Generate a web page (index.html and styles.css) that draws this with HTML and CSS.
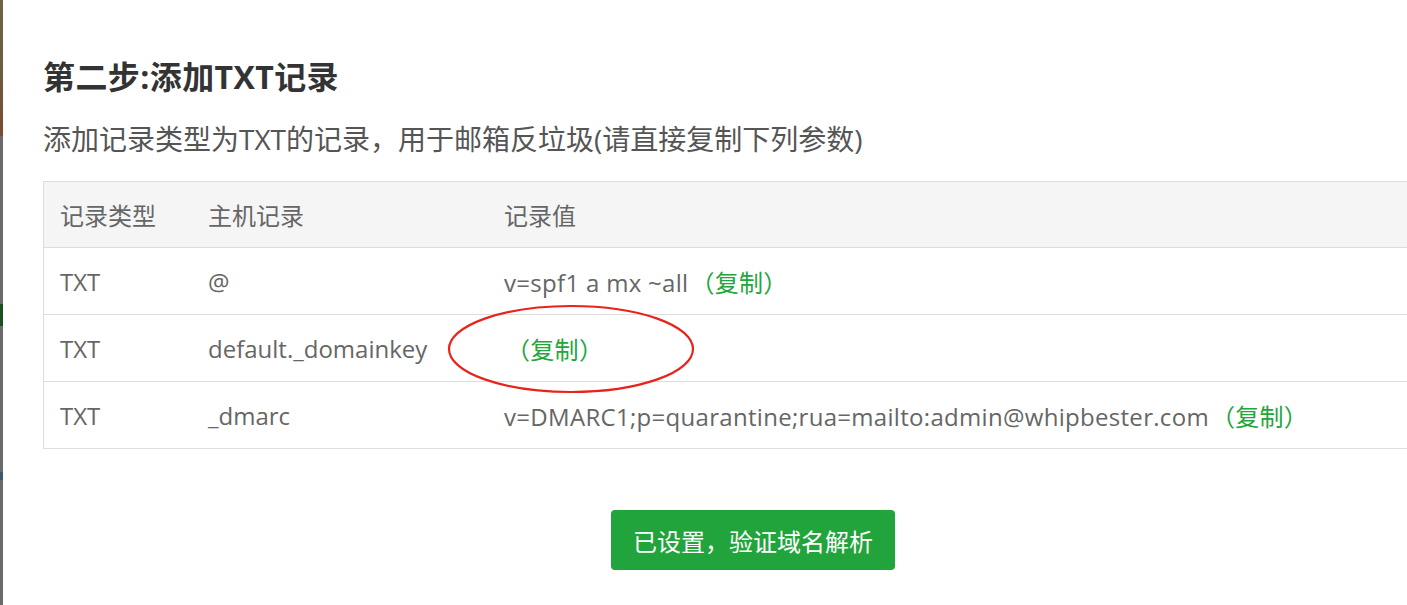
FILE: index.html
```html
<html>
  <head>
    <title>添加TXT记录</title>
    <link rel="stylesheet" href="styles.css">
  </head>
  <body>
    <div class="backdrop">
      <div class="backdrop-photo"></div>
      <div class="backdrop-mark mark-green"></div>
      <div class="backdrop-mark mark-blue"></div>
    </div>

    <section class="modal">
      <h2 class="step-title">第二步:添加TXT记录</h2>
      <p class="step-desc">添加记录类型为TXT的记录，用于邮箱反垃圾(请直接复制下列参数)</p>

      <table class="records">
        <thead>
          <tr>
            <th class="col-type">记录类型</th>
            <th class="col-host">主机记录</th>
            <th>记录值</th>
          </tr>
        </thead>
        <tbody>
          <tr>
            <td>TXT</td>
            <td>@</td>
            <td class="value">v=spf1 a mx ~all<a class="copy">（复制）</a></td>
          </tr>
          <tr>
            <td>TXT</td>
            <td>default._domainkey</td>
            <td class="value"><a class="copy">（复制）</a></td>
          </tr>
          <tr>
            <td>TXT</td>
            <td>_dmarc</td>
            <td class="value">v=DMARC1;p=quarantine;rua=mailto:admin@whipbester.com<a class="copy">（复制）</a></td>
          </tr>
        </tbody>
      </table>

      <div class="actions">
        <button class="btn-verify">已设置，验证域名解析</button>
      </div>

      <svg class="annotation" width="252" height="94" viewBox="0 0 252 94">
        <ellipse cx="126" cy="47" rx="122" ry="43" fill="none" stroke="#e8231b" stroke-width="2.2" />
      </svg>
    </section>
  </body>
</html>
```

FILE: styles.css
```css
:root {
  --fonts: "Open Sans", "Noto Sans CJK SC", sans-serif;
  --text-dark: #333333;
  --text-mid: #555555;
  --text-cell: #666666;
  --border: #dddddd;
  --head-bg: #f5f5f5;
  --green: #22a63c;
  --btn-green: #21a43c;
}

html,
body {
  margin: 0;
  padding: 0;
  height: 100%;
  overflow: hidden;
}

body {
  display: flex;
  font-family: var(--fonts);
  background: #ffffff;
}

.backdrop {
  position: relative;
  flex: 0 0 3px;
  background: #6b6b6b;
}

.backdrop-photo {
  height: 136px;
  background: linear-gradient(#6c6546, #6b5d40 50%, #7b4b2f);
}

.backdrop-mark {
  position: absolute;
  left: 0;
  width: 3px;
}

.mark-green {
  top: 304px;
  height: 22px;
  background: #1d4d22;
}

.mark-blue {
  top: 472px;
  height: 8px;
  background: #3d5a6a;
}

.modal {
  position: relative;
  flex: 0 0 1500px;
  box-sizing: border-box;
  padding: 57px 40px 0 40px;
}

.step-title {
  margin: 0;
  font-size: 32px;
  line-height: 40px;
  font-weight: bold;
  letter-spacing: 0.4px;
  color: var(--text-dark);
}

.step-desc {
  margin: 24px 0 0 0;
  font-size: 28px;
  line-height: 36px;
  color: var(--text-mid);
}

.records {
  width: 100%;
  margin-top: 24px;
  border-collapse: collapse;
  border: 1px solid var(--border);
  font-size: 24px;
  color: var(--text-cell);
}

.records th,
.records td {
  height: 67px;
  padding: 0 16px;
  text-align: left;
  font-weight: normal;
  border-top: 1px solid var(--border);
}

.records th {
  height: 66px;
  background: var(--head-bg);
}

.records .value {
  letter-spacing: 0.3px;
}

.col-type {
  width: 116px;
}

.col-host {
  width: 264px;
}

.copy {
  margin-left: 2px;
  color: var(--green);
  cursor: pointer;
}

.actions {
  display: flex;
  justify-content: center;
  margin-top: 61px;
}

.btn-verify {
  height: 60px;
  padding: 0 22px;
  border: none;
  border-radius: 4px;
  background: var(--btn-green);
  color: #ffffff;
  font-family: var(--fonts);
  font-size: 24px;
}

.annotation {
  position: absolute;
  left: 442px;
  top: 302px;
}
```
